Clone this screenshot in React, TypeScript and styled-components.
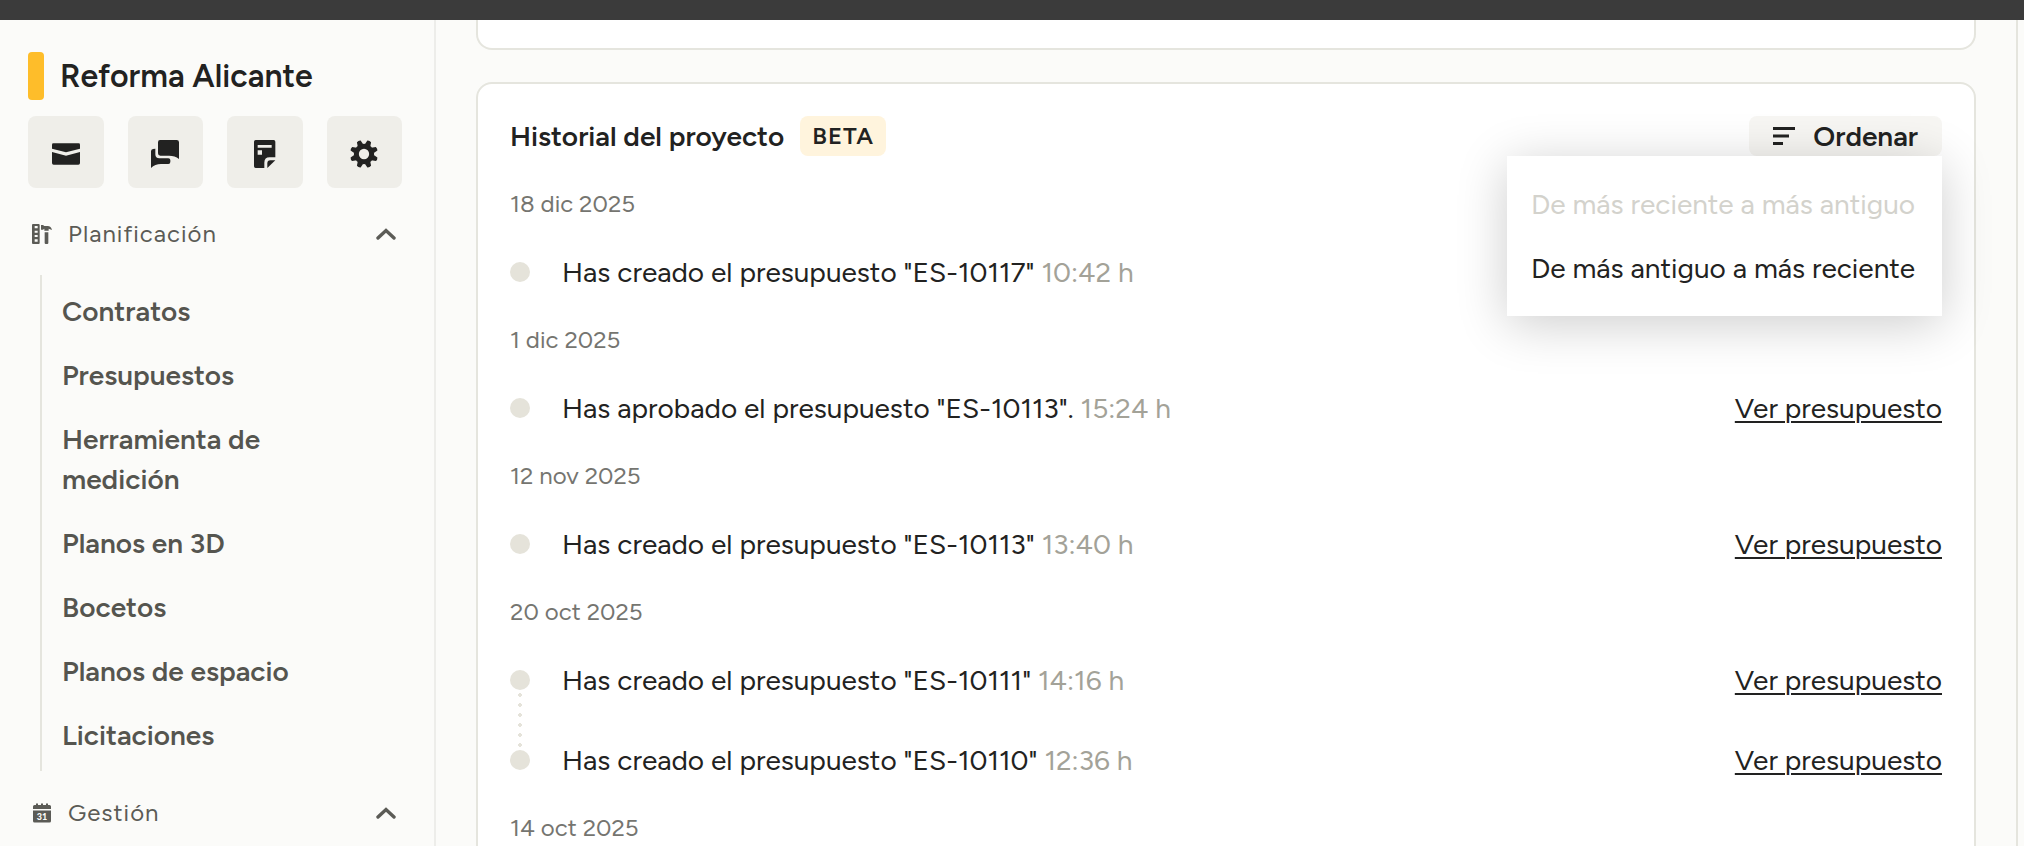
import React, { useState } from "react";
import styled, { createGlobalStyle } from "styled-components";

const GlobalStyle = createGlobalStyle`
  * { box-sizing: border-box; }
  body {
    margin: 0;
    background: #fbfbf9;
    color: #222221;
    font-family: Figtree, Lato, "Open Sans", sans-serif;
    font-size: 28px;
    line-height: 40px;
  }
  button { font: inherit; color: inherit; border: 0; padding: 0; cursor: pointer; }
  h1, h2, h3, ul { margin: 0; padding: 0; font-size: inherit; font-weight: inherit; }
  ul { list-style: none; }
`;

const Shell = styled.div`
  display: flex;
  flex-direction: column;
  height: 100vh;
  overflow: hidden;
`;

const TopBar = styled.header`
  flex: none;
  height: 20px;
  background: #3b3b3b;
`;

const Columns = styled.div`
  flex: 1;
  min-height: 0;
  display: flex;
`;

const Sidebar = styled.aside`
  flex: none;
  width: 436px;
  padding: 32px 32px 0 28px;
  border-right: 2px solid #ededea;
  overflow-y: auto;
  scrollbar-width: none;
`;

const ProjectHeading = styled.div`
  display: flex;
  align-items: center;
  gap: 16px;
  height: 48px;
`;

const ProjectColor = styled.span`
  width: 16px;
  height: 48px;
  border-radius: 4px;
  background: #febd2a;
`;

const ProjectName = styled.h1`
  font-size: 32px;
  font-weight: 600;
`;

const QuickActions = styled.div`
  display: grid;
  grid-template-columns: repeat(4, 1fr);
  gap: 24px;
  margin: 16px 0 4px;
`;

const QuickButton = styled.button`
  display: flex;
  align-items: center;
  justify-content: center;
  height: 72px;
  padding-top: 4px;
  border-radius: 8px;
  background: #efeee9;

  svg { width: 28px; height: 28px; fill: currentColor; }
`;

const SectionToggle = styled.button`
  display: flex;
  align-items: center;
  gap: 16px;
  width: 100%;
  height: 83px;
  padding: 0 6px 0 4px;
  background: none;
  color: #5b5b56;
  font-size: 24px;
  letter-spacing: 1px;
  text-align: left;
`;

const SectionTitle = styled.span`
  flex: 1;
`;

const SectionList = styled.ul`
  margin-left: 12px;
  padding: 4px 0 4px 20px;
  border-left: 2px solid #e5e5de;
`;

const SectionLink = styled.a`
  display: block;
  width: 240px;
  padding: 12px 0;
  color: #55554f;
  font-weight: 600;
  text-decoration: none;
`;

const Main = styled.main`
  flex: 1;
  min-width: 0;
  padding: 0 40px;
  border-right: 2px solid #e5e5de;
  overflow-y: auto;
  scrollbar-width: none;
`;

const ScrollStrip = styled.div`
  flex: none;
  width: 6px;
`;

const PreviousCard = styled.section`
  height: 30px;
  margin-bottom: 32px;
  border: 2px solid #e5e5de;
  border-top: 0;
  border-radius: 0 0 16px 16px;
  background: #fff;
`;

const Card = styled.section`
  padding: 32px;
  border: 2px solid #e5e5de;
  border-radius: 16px;
  background: #fff;
`;

const CardHeader = styled.div`
  display: flex;
  align-items: center;
  gap: 16px;
  height: 40px;
  margin-bottom: 20px;
`;

const CardTitle = styled.h2`
  font-weight: 600;
`;

const Badge = styled.span`
  padding: 0 12px;
  border-radius: 8px;
  background: #fff4dd;
  font-size: 24px;
  font-weight: 600;
  letter-spacing: 1px;
`;

const SortControl = styled.div`
  position: relative;
  margin-left: auto;
`;

const SortButton = styled.button`
  display: flex;
  align-items: center;
  gap: 18px;
  height: 40px;
  padding: 0 24px;
  border-radius: 8px;
  background: #f7f6f3;
  font-weight: 600;
`;

const SortMenu = styled.ul`
  position: absolute;
  top: 100%;
  right: 0;
  min-width: 435px;
  padding: 16px 0;
  background: #fff;
  box-shadow: 0 8px 48px rgba(0, 0, 0, 0.2);
`;

const SortOption = styled.button`
  display: block;
  padding: 12px 24px;
  background: none;
  white-space: nowrap;

  &:disabled { color: #d3d2cc; cursor: default; }
`;

const DayTitle = styled.h3`
  height: 56px;
  color: #757570;
  font-size: 24px;
  line-height: 56px;
`;

const EventRow = styled.li`
  display: flex;
  align-items: center;
  gap: 32px;
  height: 80px;
`;

const Marker = styled.span<{ $linked: boolean }>`
  position: relative;
  width: 20px;
  height: 20px;
  border-radius: 50%;
  background: #e5e3da;

  &::after {
    content: "";
    display: ${(p) => (p.$linked ? "block" : "none")};
    position: absolute;
    top: 20px;
    left: 8px;
    width: 4px;
    height: 60px;
    background: radial-gradient(circle, #e5e3da 2px, transparent 2px) 0 0 / 4px 10px;
  }
`;

const EventText = styled.span`
  flex: 1;
`;

const EventTime = styled.time`
  color: #a3a298;
`;

const EventLink = styled.a`
  color: inherit;
  text-decoration: underline;
  text-decoration-thickness: 2px;
  text-underline-offset: 3px;
`;

const MailIcon = () => (
  <svg viewBox="0 0 84 84" aria-hidden="true">
    <path d="M4 10H80Q84 10 84 14V26L42 37L0 26V14Q0 10 4 10Z" />
    <path d="M0 36L42 47L84 36V69Q84 74 79 74H5Q0 74 0 69Z" />
  </svg>
);

const ChatIcon = () => (
  <svg viewBox="0 0 84 84" aria-hidden="true">
    <path d="M27 0H77Q84 0 84 7V57C76 50 66 47 54 47H28Q21 47 21 40V7Q21 0 27 0Z" />
    <path d="M0 34Q0 28 6 27L13 26V43Q13 55 25 55H52Q58 55 58 60V66Q58 72 52 72H30C18 72 8 76 0 84Z" />
  </svg>
);

const NoteIcon = () => (
  <svg viewBox="0 0 84 84" aria-hidden="true">
    <path
      fillRule="evenodd"
      d="M14 0H68Q73 0 73 5V52H56Q40 52 40 68V84H14Q9 84 9 79V5Q9 0 14 0ZM20 15V23H62V15ZM20 31V44H33V31Z"
    />
    <path d="M49 84V70Q49 61 58 61H73Z" />
  </svg>
);

const GearIcon = () => (
  <svg viewBox="-42 -42 84 84" aria-hidden="true">
    <circle r="23" fill="none" stroke="currentColor" strokeWidth="15" />
    {[0, 1, 2, 3, 4, 5, 6, 7].map((i) => (
      <path key={i} d="M-9 -27L-6 -41Q0 -44 6 -41L9 -27Z" transform={`rotate(${22.5 + i * 45})`} />
    ))}
  </svg>
);

const ToolsIcon = () => (
  <svg width="20" height="20" viewBox="0 0 60 60" fill="currentColor" aria-hidden="true">
    <path
      fillRule="evenodd"
      d="M3 0H20Q23 0 23 3V57Q23 60 20 60H3Q0 60 0 57V3Q0 0 3 0ZM8 6V13H17V6ZM8 20V26H17V20ZM8 33V39H17V33ZM8 46V53H17V46Z"
    />
    <path d="M27 3H33L37 6H47Q57 6 60 18L50 14V20H37V14L33 17H27Z" />
    <path d="M38 25H49V57Q49 60 46 60H41Q38 60 38 57Z" />
  </svg>
);

const CalendarIcon = () => (
  <svg width="20" height="20" viewBox="0 0 20 20" aria-hidden="true">
    <path
      d="M1 6V3.500Q1 2 2.500 2H4V.5H6V2H9V.5H11V2H14V.5H16V2H17.500Q19 2 19 3.500V6ZM1 7.500H19V18Q19 19.500 17.500 19.500H2.500Q1 19.500 1 18Z"
      fill="currentColor"
    />
    <text x="10" y="17" textAnchor="middle" fontSize="9" fontWeight="900" fontFamily="Lato" letterSpacing="0" fill="#fbfbf9">
      31
    </text>
  </svg>
);

const ChevronUp = () => (
  <svg width="20" height="12" viewBox="0 0 20 12" aria-hidden="true">
    <path d="M2 10L10 2.500L18 10" fill="none" stroke="currentColor" strokeWidth="3.400" strokeLinecap="round" />
  </svg>
);

const SortIcon = () => (
  <svg width="22" height="20" viewBox="0 0 22 20" aria-hidden="true">
    <path d="M0 2.500H22M0 10H16M0 17.500H10" stroke="currentColor" strokeWidth="3" />
  </svg>
);

const quickActions = [
  { label: "Correo", icon: <MailIcon /> },
  { label: "Mensajes", icon: <ChatIcon /> },
  { label: "Notas", icon: <NoteIcon /> },
  { label: "Ajustes", icon: <GearIcon /> },
];

const planning = [
  "Contratos",
  "Presupuestos",
  "Herramienta de medición",
  "Planos en 3D",
  "Bocetos",
  "Planos de espacio",
  "Licitaciones",
];

type HistoryEvent = { text: string; time: string; href?: string };

const history: { day: string; events: HistoryEvent[] }[] = [
  { day: "18 dic 2025", events: [{ text: 'Has creado el presupuesto "ES-10117"', time: "10:42 h" }] },
  {
    day: "1 dic 2025",
    events: [{ text: 'Has aprobado el presupuesto "ES-10113".', time: "15:24 h", href: "#ES-10113" }],
  },
  {
    day: "12 nov 2025",
    events: [{ text: 'Has creado el presupuesto "ES-10113"', time: "13:40 h", href: "#ES-10113" }],
  },
  {
    day: "20 oct 2025",
    events: [
      { text: 'Has creado el presupuesto "ES-10111"', time: "14:16 h", href: "#ES-10111" },
      { text: 'Has creado el presupuesto "ES-10110"', time: "12:36 h", href: "#ES-10110" },
    ],
  },
  { day: "14 oct 2025", events: [] },
];

export default function App() {
  const [menuOpen, setMenuOpen] = useState(true);
  const [newestFirst, setNewestFirst] = useState(true);
  const days = newestFirst ? history : [...history].reverse();

  return (
    <Shell>
      <GlobalStyle />
      <TopBar />
      <Columns>
        <Sidebar>
          <ProjectHeading>
            <ProjectColor />
            <ProjectName>Reforma Alicante</ProjectName>
          </ProjectHeading>
          <QuickActions>
            {quickActions.map((a) => (
              <QuickButton key={a.label} aria-label={a.label}>
                {a.icon}
              </QuickButton>
            ))}
          </QuickActions>
          <nav>
            <SectionToggle aria-expanded="true">
              <ToolsIcon />
              <SectionTitle>Planificación</SectionTitle>
              <ChevronUp />
            </SectionToggle>
            <SectionList>
              {planning.map((item) => (
                <li key={item}>
                  <SectionLink href="#">{item}</SectionLink>
                </li>
              ))}
            </SectionList>
            <SectionToggle aria-expanded="true">
              <CalendarIcon />
              <SectionTitle>Gestión</SectionTitle>
              <ChevronUp />
            </SectionToggle>
          </nav>
        </Sidebar>
        <Main>
          <PreviousCard />
          <Card>
            <CardHeader>
              <CardTitle>Historial del proyecto</CardTitle>
              <Badge>BETA</Badge>
              <SortControl>
                <SortButton aria-expanded={menuOpen} onClick={() => setMenuOpen(!menuOpen)}>
                  <SortIcon />
                  Ordenar
                </SortButton>
                {menuOpen && (
                  <SortMenu>
                    <li>
                      <SortOption disabled={newestFirst} onClick={() => setNewestFirst(true)}>
                        De más reciente a más antiguo
                      </SortOption>
                    </li>
                    <li>
                      <SortOption disabled={!newestFirst} onClick={() => setNewestFirst(false)}>
                        De más antiguo a más reciente
                      </SortOption>
                    </li>
                  </SortMenu>
                )}
              </SortControl>
            </CardHeader>
            {days.map(({ day, events }) => (
              <section key={day}>
                <DayTitle>{day}</DayTitle>
                <ul>
                  {events.map((event, i) => (
                    <EventRow key={event.time}>
                      <Marker $linked={i < events.length - 1} />
                      <EventText>
                        {event.text} <EventTime>{event.time}</EventTime>
                      </EventText>
                      {event.href && <EventLink href={event.href}>Ver presupuesto</EventLink>}
                    </EventRow>
                  ))}
                </ul>
              </section>
            ))}
          </Card>
        </Main>
        <ScrollStrip />
      </Columns>
    </Shell>
  );
}
